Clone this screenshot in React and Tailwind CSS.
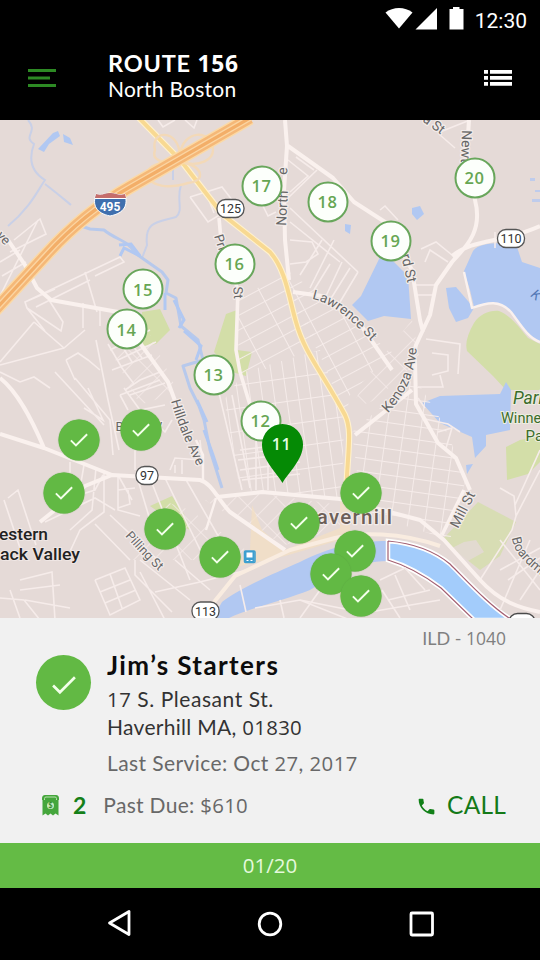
import React from "react";

const ROAD = "#f6ecea";

const STOPS = [
  { n: 20, x: 474.5, y: 177.5 },
  { n: 17, x: 261.5, y: 185.5 },
  { n: 18, x: 327.5, y: 201.5 },
  { n: 19, x: 390.5, y: 240.5 },
  { n: 16, x: 234.5, y: 263.5 },
  { n: 15, x: 143, y: 289 },
  { n: 14, x: 126.5, y: 329 },
  { n: 13, x: 213.5, y: 374.5 },
  { n: 12, x: 260.5, y: 420.5 },
];

const DONE = [
  [78.5, 440],
  [140.5, 429.5],
  [63.5, 492.5],
  [164.5, 528.5],
  [219.5, 557],
  [299, 523],
  [360.5, 492.5],
  [355, 551],
  [330.5, 573.5],
  [360.5, 596],
];

const MINOR = [
  "M0 296L38 220M14 240L40 219L46 234L10 252M2 276L26 262M0 262L20 250",
  "M25 302L120 257L124 262L95 276M36 307L90 280M45 331L27 308L25 302L55 289M27 308L61 331L63 322L49 300M85 272L97 312M83 303V328M100 308V326M85 330L64 348L34 322M64 348L0 365M34 322L0 362",
  "M66 360L78 353L88 360L100 370M66 360L75 380M0 372L20 382L34 377L50 388M55 372L104 425M75 378L110 420L113 455M96 340L108 400L119 450M88 388L103 420L84 408",
  "M110 350L150 330M118 360L156 342M112 370L152 355M122 346L132 362M130 342L142 358M108 344L122 368L134 384",
  "M190 197L208 222L236 205L222 187L190 197M205 190L214 213M260 200L268 216L276 212M158 120L163 127L175 120M185 120L194 128L197 120",
  "M288 160L308 176L290 192M296 157L314 170M317 170L288 198M290 208L358 272M290 222L340 262M334 240L310 288M290 240L312 242L318 254L306 262L290 264M358 272L340 302M350 268L330 300M322 240L300 275M330 264L314 290M342 262L326 296M380 210L385 206L398 220M421 249L436 242L452 255M425 262L430 250L448 262M416 285H434M418 295H434M426 339L460 344L458 374M432 353L448 355V371L432 375M440 375L443 387H418M418 398L425 408",
  "M125 390L140 380L160 372M120 395L128 410M120 395L160 380M124 388L140 410L165 405M130 395L165 383M135 440V470M145 412L165 432L172 420",
  "M70 462V475M63 500L95 490L103 475M45 522L95 498L115 510M84 465L78 500M96 468L92 510L70 530M104 470V512L80 530L66 560M118 475V510L140 516M118 490L135 488M128 490L130 504L118 508M138 480L150 520M150 478L190 580M165 478L210 570M185 478L232 560M118 475L132 500M110 515L160 562M95 524L130 560",
  "M4 500L24 560M8 498L18 490L36 545M0 598L24 600L40 620M10 590L20 618M20 580L52 572L55 620M20 590L60 585M25 600L70 608M95 580L125 568L140 600L110 615L95 580M100 592L130 580M105 603L136 590M110 574L122 608M140 560L190 600M140 572L165 620M135 560V575L172 612M155 592L200 582L255 568M175 560L210 590",
  "M170 470L175 458L200 460M175 465V473M182 460V474M200 440L203 470M219 393L242 490M232 395L250 488M240 450L280 445M238 460L280 455M240 470L300 462M242 480L300 474M256 430V490M268 425V490",
  "M500 488L514 496L516 516L540 470M515 505L540 450M500 570L540 548M508 580L540 558M530 540L500 610M540 590L500 540M520 600L540 570M516 516L512 530L480 580",
  "M300 600L350 610M320 590L300 618M380 580L405 568L425 590M382 590L400 618M388 600L430 590M395 575L410 610M370 612L440 600M240 585L246 612M255 608L300 600L350 620M280 600L284 618",
  "M470 120L440 132M440 135L455 148M495 248V232M425 419L448 424L460 432M438 432L452 428L446 448",
];

const LABELS = [
  { t: "ve", x: -4, y: 236, r: 48, s: 13 },
  { t: "Pri", x: 214, y: 236, r: 72, s: 13 },
  { t: "e St", x: 232.5, y: 277, r: 86, s: 13 },
  { t: "North", x: 286, y: 226, r: -87, s: 14 },
  { t: "e", x: 287, y: 175, r: -87, s: 14 },
  { t: "a St", x: 422, y: 121, r: 36, s: 13.5 },
  { t: "Newt", x: 462, y: 130, r: 92, s: 14 },
  { t: "rd St", x: 401, y: 255, r: 77, s: 14 },
];

const Shield = ({ x, y, w, label }) => (
  <g>
    <rect x={x - w / 2} y={y - 9} width={w} height="18" rx="8.5" fill="#fff" stroke="#555" strokeWidth="1.3" />
    <text x={x} y={y + 4.5} textAnchor="middle" fontSize="12.5" fill="#333">{label}</text>
  </g>
);

function MapArt() {
  return (
    <svg className="block h-full w-full" viewBox="0 120 540 498" fontFamily="Roboto, sans-serif">
      <defs>
        <pattern id="gridA" width="13" height="31" patternUnits="userSpaceOnUse" patternTransform="rotate(62)">
          <path d="M0 0V31M0 0H13" stroke={ROAD} strokeWidth="1.9" />
        </pattern>
        <pattern id="gridB" width="17" height="13" patternUnits="userSpaceOnUse" patternTransform="rotate(8)">
          <path d="M0 0V13M0 0H17" stroke={ROAD} strokeWidth="1.9" />
        </pattern>
        <pattern id="gridD" width="12" height="23" patternUnits="userSpaceOnUse" patternTransform="rotate(-8)">
          <path d="M0 0V23M0 0H12" stroke={ROAD} strokeWidth="1.9" />
        </pattern>
        <pattern id="gridC" width="14" height="26" patternUnits="userSpaceOnUse" patternTransform="rotate(45)">
          <path d="M0 0V26M0 0H14" stroke={ROAD} strokeWidth="1.5" />
        </pattern>
        <path id="lawrence" d="M312 299C330 302 350 318 371 341" />
        <path id="hilldale" d="M171 401C178 426 187 446 197 466" />
        <path id="kenoza" d="M388 413C402 398 416 378 417 342" />
        <path id="pilling" d="M125 536C136 548 147 561 161 573" />
        <path id="boardman" d="M512 538C514 553 524 563 552 584" />
      </defs>

      <rect y="120" width="540" height="498" fill="#e5dad7" />

      {/* parks */}
      <g fill="#d3dea8">
        <path d="M142 312L160 309L170 330L156 344L143 346Z" />
        <path d="M226 314L237 310V350L252 352L246 376L232 372L214 352Z" />
        <path d="M474 323C480 314 490 310 499 311C510 315 520 328 528 338L540 344V390L506 390L493 376L467 351Q464 340 474 323Z" />
        <path d="M506 447L520 440L540 436V462L528 474L507 480Z" />
        <path d="M150 506L172 496L184 514L190 530L170 520Z" />
        <path d="M442 540L478 502L516 522L500 556L480 570Z" opacity=".75" />
      </g>
      <path d="M452 548L464 542L476 540L484 552L466 562Z" fill="#e5dad7" opacity=".8" />

      {/* ponds */}
      <g fill="#b1c8f2">
        <path d="M381 255L392 260L408 276L411 319L384 316L368 321L352 305L361 296Z" />
        <path d="M464 271L473 251C480 242 500 243 516 244L522 262L540 268V341C528 338 520 324 511 312C500 300 488 302 474 307L470 290Z" />
        <path d="M446 288L456 287L474 308L468 318L456 322L449 308Z" />
        <path d="M422 403L440 396L500 394L506 382L511 390L510 430L486 435V446L475 458L472 437L440 423Z" />
        <path d="M466 465L473 464L467 474Z" />
        <path d="M412 208L420 206L424 214L417 220L412 214Z" />
        <path d="M345 224L351 225L350 234L345 231Z" />
        <path d="M38 149L53 133L58 131L60 136L49 144L44 152Z" />
        <path d="M63 134L70 138L73 145L64 142Z" />
      </g>
      <path d="M530 178h5v3h-5zM535 190h5v2h-5zM532 199h8v3h-8z" fill="#bfccec" />
      <path d="M28 120C39 132 22 136 34 144C28 160 32 172 45 180C38 190 30 208 8 226M45 184C58 194 65 200 71 205M181 185C176 200 184 210 176 217C160 222 144 220 147 245L142 258M173 155V180" fill="none" stroke="#c9d0e7" strokeWidth="2" />
      <path d="M78 225L90 229L104 230C116 240 128 240 135 253L162 272L168 280L166 293L176 298L181 326L198 340L203 360L183 366L190 388L199 406L204 420L210 450L222 488" fill="none" stroke="#b7c9ec" strokeWidth="3" strokeLinejoin="round" />
      <path d="M119 245L131 244L140 256L124 248L120 256M165 293V310M174 300L184 320L179 328M184 331L201 346L196 360M197 400L207 422M204 430L213 455L218 470" fill="none" stroke="#b1c8f2" strokeWidth="3" />

      {/* dense street blocks */}
      <path d="M292 275L330 300L368 335L392 352L350 395L346 418L322 360L296 310Z" fill="url(#gridA)" />
      <path d="M236 300L290 270L296 300L320 345L240 380Z" fill="url(#gridA)" />
      <path d="M244 372L320 350L344 420L342 498L270 492L240 490L224 400Z" fill="url(#gridD)" />
      <path d="M352 432L415 378L444 425L466 478L450 540L362 512Z" fill="url(#gridB)" />
      <path d="M130 560L160 500L190 510L260 560L230 560Z" fill="url(#gridC)" />
      <path d="M370 372L412 320L420 360L375 400L350 410Z" fill="url(#gridC)" />
      <path d="M110 350L150 335L178 392L140 405Z" fill="url(#gridC)" />
      <path d="M205 500L250 492L340 505L340 528L285 545L220 510Z" fill="url(#gridC)" />

      {/* river */}
      <path d="M213 618L222 602C240 588 275 573 300 562C330 547 355 541 388 541V561C355 562 340 572 310 590C285 600 250 608 229 618Z" fill="#b1c8f2" />
      <path d="M388 541C410 543 432 549 450 564C470 584 490 606 512 620H474L441 588C425 576 408 566 388 560Z" fill="#a3ccfb" stroke="#fff" strokeWidth="4.5" />
      <path d="M388 541C410 543 432 549 450 564C470 584 490 606 512 620M474 620L441 588C425 576 408 566 388 560V541" fill="none" stroke="#a35f72" strokeWidth="1.2" />

      <g fill="none" stroke={ROAD} strokeWidth="1.6">
        {MINOR.map((d, i) => <path key={i} d={d} />)}
      </g>

      {/* downtown tint */}
      <path d="M232 568L250 550L252 505L262 530L285 550L340 528V500H350V600H340V540L285 556Z" fill="#f3dfc3" opacity=".75" />

      {/* main local roads */}
      <g fill="none" stroke="#faf1ee" strokeLinejoin="round">
        <path strokeWidth="4" d="M8 240L25 265L37 288L51 300L118 312L145 350L168 382L184 425M0 378C18 392 32 420 44 448M0 434L44 448L112 475L200 480C212 483 218 500 230 512L285 550M40 522L85 486L112 475M217 497L262 492L340 499M340 499L420 520L444 540L480 580C500 602 520 608 540 612" />
        <path strokeWidth="4" d="M285 120L287 146L284 190L285 240L289 280M288 146L333 178L354 202L385 222L412 270L420 320L423 332M469 120L467 150L475 200C484 234 462 250 452 262L436 285L430 315L416 345L410 370M452 256C475 238 500 244 540 226M293 292L322 296L360 324L392 370M355 435L412 390M415 360L416 404L438 443L456 458L470 490" />
        <path strokeWidth="3.6" d="M219 218L221 240L238 290L236 350L240 372L250 405M464 490L442 535" />
        <path strokeWidth="4" stroke="#f9ece0" d="M206 612L235 576L290 550L335 538C360 532 400 532 440 546" />
        <path strokeWidth="2.4" d="M464 272L472 308C488 302 500 300 511 312C520 324 528 338 540 342M203 480V455L196 440M216 498L206 530" />
      </g>

      {/* arterial roads */}
      <g fill="none" strokeLinejoin="round">
        <path d="M139 118L182 162L222 214L270 252C286 270 289 298 296 322C304 352 322 372 345 415C353 432 347 452 346 500" stroke="#fff1cd" strokeWidth="6.2" />
        <path d="M139 118L182 162L222 214L270 252C286 270 289 298 296 322C304 352 322 372 345 415C353 432 347 452 346 500" stroke="#f8d992" strokeWidth="4" />
        <path d="M155 150C150 130 178 128 180 155C182 130 212 128 213 150C213 160 200 166 185 163C205 168 204 182 188 183C168 189 150 187 148 174C148 164 160 163 177 161C162 164 151 160 155 150Z" stroke="#f3d9b8" strokeWidth="2.4" />
        <path d="M-5 310L45 256C72 226 98 205 130 187L250 118" stroke="#fbd9a5" strokeWidth="14" />
        <path d="M-5 310L45 256C72 226 98 205 130 187L250 118" stroke="#f5b878" strokeWidth="11" />
        <path d="M-5 310L45 256C72 226 98 205 130 187L250 118" stroke="#fbd5a2" strokeWidth="6" />
        <path d="M-5 310L45 256C72 226 98 205 130 187L250 118" stroke="#f3ae68" strokeWidth="3.2" />
      </g>

      {/* shields */}
      <path d="M96 194C102 196 105 193 110 193C115 193 119 196 125 194C128 205 125 213 110 216C96 213 92 205 96 194Z" fill="#3f6fae" stroke="#fff" strokeWidth="1" />
      <path d="M96 194C102 196 105 193 110 193C115 193 119 196 125 194L126 198H95Z" fill="#c56d6b" />
      <path d="M95 198.500H126" stroke="#fff" />
      <text x="110" y="210.500" textAnchor="middle" fontSize="12" fontWeight="700" fill="#fff">495</text>
      <Shield x={230.5} y={208.5} w={27} label="125" />
      <Shield x={511} y={238.5} w={27} label="110" />
      <Shield x={147} y={475.5} w={22} label="97" />
      <Shield x={205.5} y={611} w={27} label="113" />
      <rect x="509" y="613.500" width="26" height="18" rx="8.500" fill="#fff" stroke="#4a4a4a" strokeWidth="1.400" />
      <rect x="244.500" y="551" width="10" height="11" rx="1" fill="#3d9fd0" />
      <rect x="246.500" y="552.500" width="6" height="5" fill="#fff" />
      <path d="M246.500 560.500H252.500" stroke="#fff" strokeDasharray="2 2" />
      <rect x="244.500" y="551" width="10.500" height="11.500" rx="1" fill="none" stroke="#3d9fd0" strokeWidth="1.500" />

      {/* labels */}
      <g fill="#666" stroke="#f3ecea" strokeWidth="2.500" paintOrder="stroke" strokeLinejoin="round">
        {LABELS.map((l, i) => (
          <text key={i} fontSize={l.s} transform={`translate(${l.x} ${l.y}) rotate(${l.r})`}>{l.t}</text>
        ))}
        <text fontSize="13.500"><textPath href="#lawrence">Lawrence St</textPath></text>
        <text fontSize="13.500"><textPath href="#hilldale">Hilldale Ave</textPath></text>
        <text fontSize="14"><textPath href="#kenoza">Kenoza Ave</textPath></text>
        <text fontSize="12.500"><textPath href="#pilling">Pilling St</textPath></text>
        <text fontSize="13"><textPath href="#boardman">Boardman</textPath></text>
        <text fontSize="14" transform="translate(458 529) rotate(-63)">Mill St</text>
        <text fontSize="13" x="115.500" y="431">B</text>
        <text fontSize="13" x="156" y="429">y</text>
        <text x="301" y="523.500" fontSize="20.500" fontWeight="500" fill="#6d5f58" textLength="91">Haverhill</text>
      </g>
      <g fill="#222" fontSize="16.500" fontWeight="500" stroke="#efe6e4" strokeWidth="2" paintOrder="stroke">
        <text x="-1" y="540" textLength="49" lengthAdjust="spacingAndGlyphs">estern</text>
        <text x="0" y="559.500" textLength="80" lengthAdjust="spacingAndGlyphs">ack Valley</text>
      </g>
      <g fill="#3b6b2c" stroke="#edeee0" strokeWidth="2" paintOrder="stroke">
        <text x="513" y="404" fontSize="17.500" fontStyle="italic">Park</text>
        <text x="501" y="423" fontSize="14.500">Winnek</text>
        <text x="525.500" y="440.500" fontSize="15">Park</text>
      </g>
      <text x="530" y="296" fontSize="14" fontStyle="italic" fill="#5277b5" transform="rotate(38 530 296)">K</text>
    </svg>
  );
}

const Check = ({ className }) => (
  <svg className={className} viewBox="0 0 28 22" fill="none">
    <path d="M2 11.500L9.500 19L26 2.500" stroke="#f2ffe9" strokeWidth="2.900" />
  </svg>
);

// Figures are set in a face whose "1" has no foot.
const Num = ({ children }) => <span className="font-['Open_Sans'] text-[0.97em]">{children}</span>;

const at = (x, y) => ({ left: x, top: y - 120 });

export default function App() {
  return (
    <div className="flex h-[960px] w-[540px] flex-col overflow-hidden bg-black font-['Lato',sans-serif]">
      <header className="flex h-[120px] shrink-0 flex-col text-white">
        <div className="flex h-10 items-center justify-end pr-[13px]">
          <svg className="-mt-0.5 h-[30px] w-[82px]" viewBox="384 4 82 30" fill="#fff">
            <path d="M384.500 12.500C392 6.500 404 6.500 411.500 12.500L398 28.500Z" />
            <path d="M436 8V29.500H414.500Z" />
            <path d="M448.500 9H452V7H458.500V9H462.500V29.500H448.500Z" />
          </svg>
          <span className="ml-2 mt-[3px] font-['Roboto'] text-[21px] leading-none">12:30</span>
        </div>
        <div className="flex h-20 items-start pl-7 pr-7">
          <svg className="mt-7 h-5 w-7" viewBox="0 0 28 20" stroke="#2d8a24" strokeWidth="3">
            <path d="M0 2.500H28M0 10H22M0 17.500H28" />
          </svg>
          <div className="ml-[52px] mt-2.5 flex-1">
            <h1 className="text-[23.500px] font-bold leading-[26px] tracking-[0.8px]">ROUTE <Num>156</Num></h1>
            <p className="text-[21px] leading-[24px] tracking-[0.25px]">North Boston</p>
          </div>
          <svg className="mt-[29px] h-[18px] w-[28px]" viewBox="0 0 28 18" fill="#fff">
            <path d="M0 1h4v3.700H0zM0 7h4v3.700H0zM0 13h4v3.700H0zM6 1h22v3.700H6zM6 7h22v3.700H6zM6 13h22v3.700H6z" />
          </svg>
        </div>
      </header>

      <main className="relative h-[498px] shrink-0 overflow-hidden">
        <MapArt />
        {STOPS.map((s) => (
          <div key={s.n} style={at(s.x, s.y)} className="absolute flex h-[41px] w-[41px] -translate-x-1/2 -translate-y-1/2 items-center justify-center rounded-full border-2 border-[#68a65b] bg-[#fcfffb] pt-px font-['Open_Sans'] text-[16.500px] font-semibold leading-none tracking-[0.6px] text-[#66a653]">
            {s.n}
          </div>
        ))}
        {DONE.map(([x, y]) => (
          <div key={`${x}-${y}`} style={at(x, y)} className="absolute flex h-[41px] w-[41px] -translate-x-1/2 -translate-y-1/2 items-center justify-center rounded-full bg-[#62b944] shadow-[0_0_1px_#5aa044]">
            <Check className="h-[15px] w-[19px]" />
          </div>
        ))}
        <div style={at(262, 424)} className="absolute h-[59px] w-[41px]">
          <svg className="absolute inset-0 h-full w-full" viewBox="0 0 41 59">
            <path d="M20.500 59C15 49 0 36 0 20.500A20.500 20.500 0 0 1 41 20.500C41 36 26 49 20.500 59Z" fill="#058a05" />
          </svg>
          <span className="relative block pr-0.5 pt-3 text-center font-['Open_Sans'] text-[16px] font-semibold leading-none tracking-[0.6px] text-[#e8ffe6]">11</span>
        </div>
      </main>

      <section className="flex h-[225px] shrink-0 flex-col bg-[#f1f1f1] pl-9 pr-[34px]">
        <div className="flex">
          <div className="mt-[37px] flex h-[55px] w-[55px] shrink-0 items-center justify-center rounded-full bg-[#62b944]">
            <Check className="mt-1 h-5 w-7" />
          </div>
          <div className="ml-4 flex-1 whitespace-nowrap pt-[31px]">
            <h2 className="text-[26px] font-bold leading-8 tracking-[1.4px] text-[#0c0c0c]">Jim’s Starters</h2>
            <p className="mt-1 h-7 text-[21px] leading-7 tracking-[0.55px] text-[#333]"><Num>17</Num> S. Pleasant St.</p>
            <p className="h-7 text-[21px] leading-7 tracking-[0.3px] text-[#333]">Haverhill MA, <Num>01830</Num></p>
            <p className="mt-2 h-7 text-[21px] leading-7 tracking-[0.4px] text-[#686868]">Last Service: Oct <Num>27</Num>, <Num>2017</Num></p>
          </div>
          <div className="w-0">
            <p className="float-right mt-2 whitespace-nowrap text-[18px] leading-6 text-[#808080]">ILD - <Num>1040</Num></p>
          </div>
        </div>
        <div className="mt-3 flex h-8 items-center whitespace-nowrap">
          <svg className="ml-1.5 h-[21px] w-[17px]" viewBox="0 0 17 21">
            <path d="M0 3.500Q0 0 3 0H14Q17 0 17 3.500V5H16.500V20.500L13.500 18.500L11 20.500L8.500 18.500L6 20.500L3.500 18.500L0.500 20.500V5H0Z" fill="#45a63c" />
            <path d="M2.500 5V3.500Q2.500 2 4 2H13Q14.500 2 14.500 3.500V5" stroke="#b9e2ae" fill="none" />
            <circle cx="8.500" cy="10.500" r="3.500" fill="#c9ebc0" />
            <text x="8.500" y="13.200" textAnchor="middle" fontSize="7.500" fontWeight="700" fill="#318b2a">$</text>
          </svg>
          <span className="ml-[14px] text-[23px] font-bold leading-none text-[#158019]">2</span>
          <span className="ml-[17px] text-[21px] leading-none tracking-[0.3px] text-[#686868]">Past Due: <Num>$610</Num></span>
          <svg className="ml-auto mt-0.5 h-[21px] w-[21px]" viewBox="0 0 24 24" fill="#128018">
            <path d="M6.620 10.790c1.440 2.830 3.760 5.140 6.590 6.590l2.200-2.200c.27-.27.67-.36 1.020-.24 1.120.37 2.330.57 3.570.57.55 0 1 .45 1 1V20c0 .55-.45 1-1 1-9.390 0-17-7.610-17-17 0-.55.45-1 1-1h3.500c.55 0 1 .45 1 1 0 1.250.2 2.450.57 3.570.11.35.03.74-.25 1.020l-2.200 2.200z" />
          </svg>
          <span className="ml-2.5 text-[24.500px] leading-none tracking-[0.2px] text-[#147a18]">CALL</span>
        </div>
      </section>

      <div className="flex h-[45px] shrink-0 items-center justify-center bg-[#64bb45] font-['Open_Sans'] text-[20.500px] leading-none text-[#e5f9dc]">01/20</div>

      <nav className="flex h-[72px] shrink-0 items-center">
        <svg className="h-full w-full" viewBox="0 888 540 72" fill="none" stroke="#fff" strokeWidth="2.800" strokeLinejoin="round">
          <path d="M109.500 923L129 911.500V934.500Z" />
          <circle cx="270" cy="924" r="10.800" />
          <rect x="411" y="913" width="21.500" height="22" rx="1" />
        </svg>
      </nav>
    </div>
  );
}
